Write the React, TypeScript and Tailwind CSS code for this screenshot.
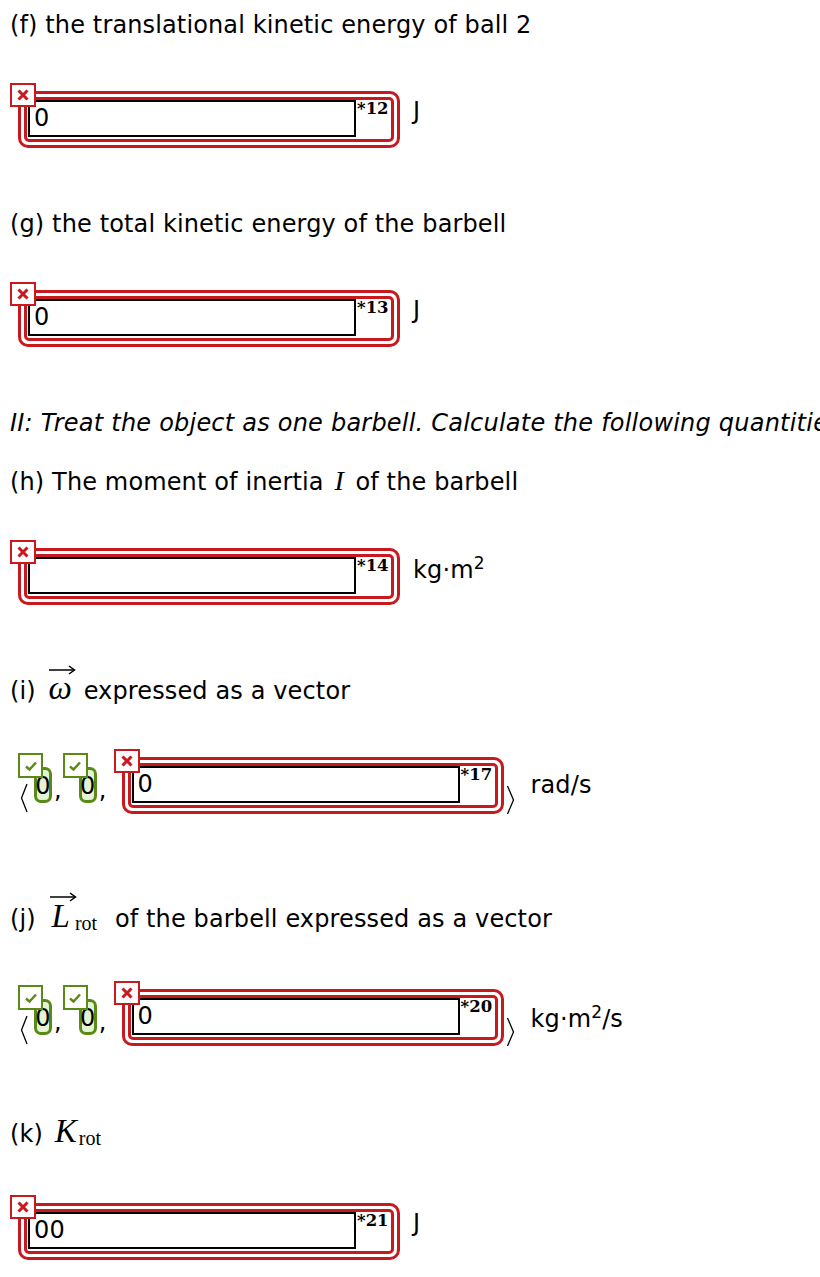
import React from 'react'

function XBadge() {
  return (
    <div className="absolute -left-[11px] -top-[11px] z-10 flex h-[24px] w-[26px] items-center justify-center border-2 border-[#c8191e] bg-white">
      <svg width="12" height="12" viewBox="0 0 12 12">
        <path d="M1.5 1.5L10.5 10.5M10.5 1.5L1.5 10.5" stroke="#c8191e" strokeWidth="3" />
      </svg>
    </div>
  )
}

function CheckBadge() {
  return (
    <div className="absolute -left-[16px] -top-[14px] z-10 flex h-[25px] w-[25px] items-center justify-center border-2 border-[#5a8a16] bg-white">
      <svg width="14" height="12" viewBox="0 0 14 12">
        <path d="M2 6.5L5.5 9.5L12 2.5" fill="none" stroke="#5a8a16" strokeWidth="2.4" />
      </svg>
    </div>
  )
}

function AnswerBox({ value, tag }: { value: string; tag: string }) {
  return (
    <div className="relative shrink-0 rounded-[10px] border-[3px] border-[#c8191e] bg-white p-[3px]">
      <XBadge />
      <div className="flex items-start rounded-[5px] border-[3px] border-[#c8191e] pb-[2px] pl-[1px]">
        <div className="h-[37px] w-[328px] border-2 border-black pl-[4px] leading-[33px]">{value}</div>
        <span className="w-[35px] pl-[1px] font-['DejaVu_Serif',serif] text-[16.5px] leading-[18px] font-bold tracking-normal">
          *{tag}
        </span>
      </div>
    </div>
  )
}

function Capsule({ ml }: { ml: string }) {
  return (
    <div className={`relative mt-[10px] shrink-0 ${ml}`}>
      <CheckBadge />
      <div className="flex h-[36px] w-[18px] justify-center overflow-visible rounded-[7px] border-[3px] border-[#5a8a16] bg-[#e3f3d4] pt-[2px] leading-[28px]">
        0
      </div>
    </div>
  )
}

function Arrow({ className }: { className: string }) {
  return (
    <svg className={`absolute ${className}`} width="28" height="10" viewBox="0 0 28 10">
      <path d="M1 5H26" stroke="black" strokeWidth="1.5" />
      <path d="M21 1L26.5 5L21 9" fill="none" stroke="black" strokeWidth="1.5" />
    </svg>
  )
}

function VectorRow({ tag, unit }: { tag: string; unit: React.ReactNode }) {
  return (
    <div className="flex h-[57px] items-start">
      <svg className="ml-[10px] mt-[26px] shrink-0" width="8" height="30" viewBox="0 0 8 30">
        <path d="M7 1L1.5 15L7 29" fill="none" stroke="black" strokeWidth="1.3" />
      </svg>
      <Capsule ml="ml-[6px]" />
      <span className="ml-[2px] mt-[19px] leading-[28px]">,</span>
      <Capsule ml="ml-[17px]" />
      <span className="ml-[2px] mt-[19px] leading-[28px]">,</span>
      <div className="ml-[15px]">
        <AnswerBox value="0" tag={tag} />
      </div>
      <svg className="ml-[2px] mt-[28px] shrink-0" width="9" height="30" viewBox="0 0 9 30">
        <path d="M1.5 1L7.5 15L1.5 29" fill="none" stroke="black" strokeWidth="1.3" />
      </svg>
      {unit}
    </div>
  )
}

const serif = "font-['Liberation_Serif',serif] italic leading-[20px] tracking-normal"
const subCls = "relative top-[3px] font-['Liberation_Serif',serif] text-[20px] leading-[20px] tracking-normal"

export default function App() {
  return (
    <div className="h-[1277px] w-[820px] overflow-hidden bg-white pl-[10px] font-['DejaVu_Sans','Verdana',sans-serif] text-[24px] leading-[28px] tracking-[0.13px] text-black">
      <div className="mt-[11px] h-[28px] whitespace-nowrap">(f) the translational kinetic energy of ball 2</div>
      <div className="mt-[52px] ml-[8px] flex items-start">
        <AnswerBox value="0" tag="12" />
        <span className="ml-[13px] mt-[6px]">J</span>
      </div>

      <div className="mt-[62px] h-[28px] whitespace-nowrap">(g) the total kinetic energy of the barbell</div>
      <div className="mt-[52px] ml-[8px] flex items-start">
        <AnswerBox value="0" tag="13" />
        <span className="ml-[13px] mt-[6px]">J</span>
      </div>

      <div className="mt-[62px] h-[28px] whitespace-nowrap italic tracking-[0.22px]">
        II: Treat the object as one barbell. Calculate the following quantities
      </div>
      <div className="mt-[31px] h-[28px] whitespace-nowrap">
        (h) The moment of inertia{' '}
        <span className={`${serif} ml-[3px] mr-[4px] inline-block text-[28px]`}>I</span> of the barbell
      </div>
      <div className="mt-[52px] ml-[8px] flex items-start">
        <AnswerBox value="" tag="14" />
        <span className="ml-[13px] mt-[8px] whitespace-nowrap">
          kg·m<span className="relative -top-[9px] text-[17px]">2</span>
        </span>
      </div>

      <div className="mt-[72px] h-[28px] whitespace-nowrap">
        (i){' '}
        <span className="relative ml-[5px] mr-[4px] inline-block">
          <Arrow className="-left-[1px] -top-[12px]" />
          <span className={`${serif} text-[33px]`}>ω</span>
        </span>{' '}
        expressed as a vector
      </div>
      <div className="mt-[52px]">
        <VectorRow tag="17" unit={<span className="ml-[16px] mt-[14px]">rad/s</span>} />
      </div>

      <div className="mt-[91px] h-[28px] whitespace-nowrap">
        (j){' '}
        <span className="relative ml-[8px] inline-block">
          <Arrow className="-left-[3px] -top-[13px]" />
          <span className={`${serif} text-[33px]`}>L</span>
        </span>
        <span className={`${subCls} ml-[5px] mr-[10px]`}>rot</span> of the barbell expressed as a vector
      </div>
      <div className="mt-[56px]">
        <VectorRow
          tag="20"
          unit={
            <span className="ml-[16px] mt-[16px] whitespace-nowrap">
              kg·m<span className="relative -top-[9px] text-[17px]">2</span>/s
            </span>
          }
        />
      </div>

      <div className="mt-[74px] h-[28px] whitespace-nowrap">
        (k) <span className={`${serif} ml-[4px] inline-block text-[33px]`}>K</span>
        <span className={`${subCls} ml-[2px]`}>rot</span>
      </div>
      <div className="mt-[55px] ml-[8px] flex items-start">
        <AnswerBox value="00" tag="21" />
        <span className="ml-[13px] mt-[6px]">J</span>
      </div>
    </div>
  )
}
